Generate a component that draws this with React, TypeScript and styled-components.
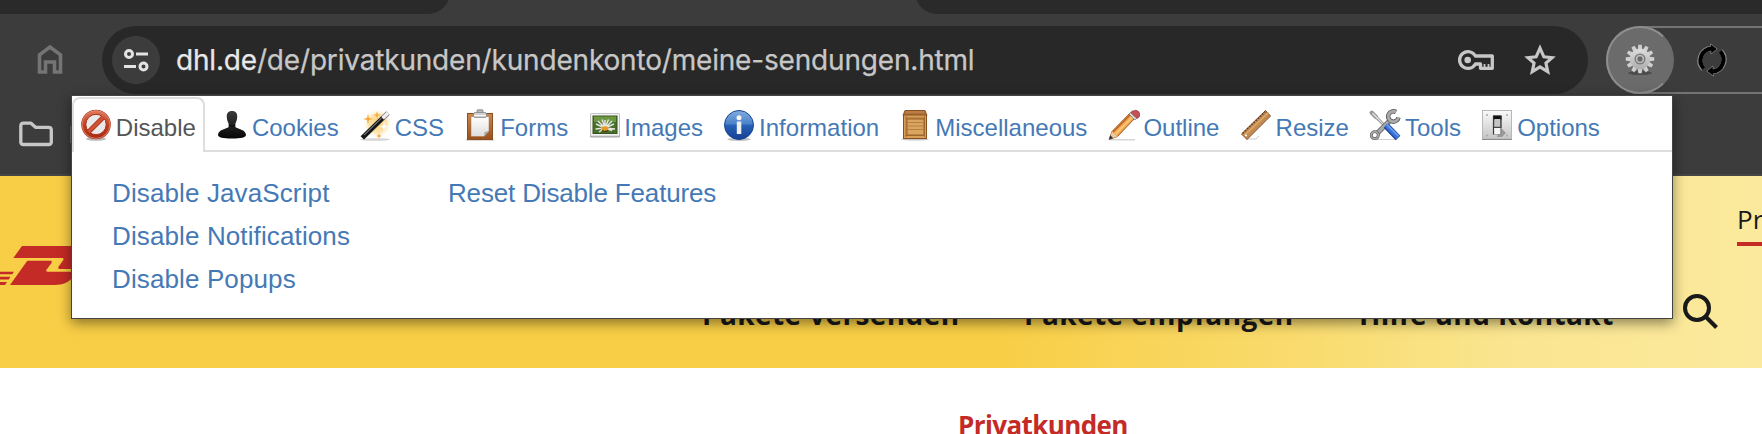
import { ReactNode } from "react";
import styled, { createGlobalStyle } from "styled-components";

const GlobalStyle = createGlobalStyle`
    * {
        box-sizing: border-box;
    }
    body {
        margin: 0;
        background: #fff;
        overflow: hidden;
    }
    svg {
        display: block;
        flex-shrink: 0;
    }
`

const Window = styled.div`
    position: relative;
    height: 434px;
    overflow: hidden;
    background: #fff;
`
/* browser chrome */
const Chrome = styled.div`
    height: 176px;
    background: #3c3c3c;
    border-bottom: 2px solid #464646;
`
const TabStrip = styled.div`
    display: flex;
    justify-content: space-between;
    align-items: flex-end;
    height: 14px;
    overflow: hidden;
`
const TabEdge = styled.div<{ $side: "left" | "right" }>`
    width: ${props => props.$side === "left" ? "450px" : "847px"};
    height: 40px;
    background: #2a2a2a;
    border-radius: ${props => props.$side === "left" ? "0 0 22px 0" : "0 0 0 22px"};
`
const Toolbar = styled.div`
    display: flex;
    align-items: center;
    height: 92px;
    padding-left: 34px;
`
const AddressBar = styled.div`
    display: flex;
    align-items: center;
    width: 1486px;
    height: 68px;
    margin-left: 36px;
    padding: 0 29px 0 10px;
    border-radius: 34px;
    background: #282828;
    color: #c7c7c7;
`
const SiteInfo = styled.div`
    display: flex;
    align-items: center;
    justify-content: center;
    width: 48px;
    height: 48px;
    margin-right: 16px;
    border-radius: 50%;
    background: #3c3c3c;
`
const Url = styled.div`
    flex: 1;
    font-family: Inter, "Liberation Sans", sans-serif;
    font-size: 28px;
    line-height: 40px;
    letter-spacing: -0.18px;
    white-space: nowrap;
    color: #c7c7c7;
    -webkit-text-stroke: 0.25px;
    b {
        font-weight: 400;
        color: #e8e8e8;
    }
`
const AddressActions = styled.div`
    display: flex;
    align-items: center;
    gap: 26px;
`
const Extensions = styled.div`
    display: flex;
    align-items: center;
    flex: 1;
    height: 68px;
    margin-left: 18px;
    border: 2px solid #747474;
    border-right: none;
    border-radius: 34px 0 0 34px;
`
const ActiveExtension = styled.div`
    display: flex;
    align-items: center;
    justify-content: center;
    width: 68px;
    height: 68px;
    margin: 0 22px 0 -2px;
    border: 2px solid #8e8e8e;
    border-right-color: #6b6b6b;
    border-radius: 50%;
    background: #6b6b6b;
`
const Bookmarks = styled.div`
    display: flex;
    align-items: center;
    height: 56px;
    padding-left: 17px;
`
const Divider = styled.div`
    width: 2px;
    height: 17px;
    margin-left: 15px;
    background: #6a6a6a;
`
/* web page under the popup */
const SiteHeader = styled.header`
    height: 192px;
    background: linear-gradient(90deg, #f8ce46 0, #f8ce46 1000px, #f9da6a 1275px, #fae691 1520px, #fbe99d 1762px);
    font-family: "Open Sans", "Noto Sans", sans-serif;
    color: #191919;
`
const MetaRow = styled.div`
    display: flex;
    justify-content: flex-end;
    height: 70px;
    padding-top: 26px;
`
const MetaLink = styled.div`
    width: 25px;
    height: 44px;
    border-bottom: 4px solid #c42a26;
    font-size: 26px;
    line-height: 34px;
    white-space: nowrap;
    overflow: hidden;
`
const MainRow = styled.div`
    display: flex;
    height: 122px;
`
const MainNav = styled.nav`
    display: flex;
    gap: 66px;
    margin: 50px 0 0 627px;
    font-size: 28px;
    font-weight: 700;
    line-height: 36px;
    white-space: nowrap;
`
const NavItem = styled.span<{ $width: number }>`
    width: ${props => props.$width}px;
    letter-spacing: 0.4px;
`
const SearchButton = styled.div`
    margin: 46px 0 0 67px;
`
const PageTitle = styled.h2`
    margin: 39px 0 0 958px;
    font-family: "Open Sans", "Noto Sans", sans-serif;
    font-size: 26px;
    font-weight: 700;
    line-height: 36px;
    letter-spacing: -0.6px;
    color: #c42a26;
`
/* extension popup */
const Popup = styled.div`
    position: absolute;
    top: 95px;
    left: 71px;
    width: 1602px;
    height: 224px;
    border: 1px solid #444;
    background: #fff;
    box-shadow: 0 4px 12px rgba(0, 0, 0, 0.45);
    font-family: "Liberation Sans", Arial, sans-serif;
    color: #4579b5;
`
const Tabs = styled.div`
    display: flex;
    height: 56px;
    padding-top: 1px;
    border-bottom: 2px solid #ddd;
`
const Tab = styled.div<{ $active?: boolean }>`
    display: flex;
    align-items: center;
    gap: 3.8px;
    height: 55px;
    margin-right: 3.3px;
    padding: 0 7px 1px 6px;
    border: 2px solid ${props => props.$active ? "#ddd" : "transparent"};
    border-bottom: none;
    border-radius: 8px 8px 0 0;
    background: ${props => props.$active ? "#fff" : "none"};
    color: ${props => props.$active ? "#555" : "inherit"};
    font-size: 24px;
    white-space: nowrap;
    span {
        padding-top: 5px;
    }
`
const Menu = styled.div`
    display: flex;
    padding: 20px 40px;
`
const MenuColumn = styled.div<{ $spacing: number }>`
    width: 336px;
    font-size: 26px;
    line-height: 43px;
    letter-spacing: ${props => props.$spacing}px;
    white-space: nowrap;
`

const Icon = ({ children }: { children: ReactNode }) => (
    <svg width="32" height="32" viewBox="0 0 32 32">{children}</svg>
)

const DisableIcon = () => (
    <Icon>
        <defs>
            <linearGradient id="red" x2="0" y2="1">
                <stop offset="0" stopColor="#dd7a5c" />
                <stop offset=".5" stopColor="#c8401f" />
                <stop offset="1" stopColor="#a92a12" />
            </linearGradient>
        </defs>
        <ellipse cx="16" cy="30" rx="10" ry="1.7" fill="#bbb" />
        <circle cx="16" cy="15.500" r="14.8" fill="#a8301a" />
        <circle cx="16" cy="15.500" r="13.9" fill="url(#red)" stroke="#e2937c" strokeWidth=".8" />
        <circle cx="16" cy="15.500" r="10.2" fill="#e9e9e9" stroke="#a8301a" />
        <path d="M9 22.500L23 8.500" stroke="#a8301a" strokeWidth="4.8" />
        <path d="M8.600 22.900L23.400 8.100" stroke="#cf5232" strokeWidth="3.2" />
    </Icon>
)

const CookiesIcon = () => (
    <Icon>
        <defs>
            <linearGradient id="person" x2="0" y2="1">
                <stop offset="0" stopColor="#3b3b3b" />
                <stop offset=".6" stopColor="#1c1c1c" />
                <stop offset="1" stopColor="#060606" />
            </linearGradient>
        </defs>
        <path d="M16 2c4 0 5.4 2.500 5.200 6-.1 3-1 5-1.800 6.500v3.500c2 2 10.600 2.500 10.600 8 0 2.400-5 3.500-14 3.500S2 28.400 2 26c0-5.500 8.600-6 10.600-8v-3.500C11.800 13 10.900 11 10.800 8 10.600 4.500 12 2 16 2z" fill="url(#person)" />
        <path d="M13 16q3 2.500 6 0" stroke="#080808" fill="none" />
    </Icon>
)

const CssIcon = () => (
    <Icon>
        <defs>
            <radialGradient id="glow">
                <stop offset="0" stopColor="#fbcf73" />
                <stop offset=".6" stopColor="#fde3ae" />
                <stop offset="1" stopColor="#fff" stopOpacity="0" />
            </radialGradient>
        </defs>
        <ellipse cx="16" cy="30.500" rx="15" ry="1.300" fill="#d5d5d5" />
        <circle cx="18.500" cy="14.500" r="15" fill="url(#glow)" />
        <path d="M9 5l1 4 4 1-4 1-1 4-1-4-4-1 4-1zM18 2l.8 3.200L22 6l-3.200.8L18 10l-.8-3.200L14 6l3.200-.8zM20 24l.8 2.200 2.200.8-2.200.8L20 30l-.8-2.200L17 27l2.200-.8z" fill="#f5a83b" />
        <path d="M25 12l1 4.500 4 1-4 1-1 4.500-1-4.500-4-1 4-1z" fill="#fff" />
        <path d="M3.200 29L29 4" stroke="#777" strokeWidth="5" />
        <path d="M3.500 28.700L24 8.700" stroke="#141414" strokeWidth="4.400" />
        <path d="M5 26.200L22.500 9.200" stroke="#777" strokeWidth="1.100" />
        <path d="M23.500 9.300L29 4" stroke="#eee" strokeWidth="3.500" />
    </Icon>
)

const FormsIcon = () => (
    <Icon>
        <defs>
            <linearGradient id="board" x2="0" y2="1">
                <stop offset="0" stopColor="#c98a51" />
                <stop offset="1" stopColor="#99501c" />
            </linearGradient>
            <linearGradient id="sheet" x2="0" y2="1">
                <stop offset="0" stopColor="#fff" />
                <stop offset="1" stopColor="#ddd" />
            </linearGradient>
        </defs>
        <path d="M2 31h28" stroke="#bbb" />
        <rect x="3.500" y="4.500" width="25" height="26" fill="url(#board)" stroke="#8c4d20" />
        <path d="M7 7.500h18v14.500L20 27.500H7z" fill="url(#sheet)" stroke="#ad6c3c" strokeWidth=".5" />
        <path d="M20 27.500l.5-4.500 4.500-1z" fill="#aaa" />
        <path d="M13 3.500V1.800Q13 .8 14 .8h4q1 0 1 1v1.700z" fill="#bbb" stroke="#777" strokeWidth=".8" />
        <rect x="9.500" y="3.500" width="13" height="5" rx="1.500" fill="#d2d2d2" stroke="#888" strokeWidth=".8" />
        <path d="M10 6.500h12" stroke="#f8f8f8" />
    </Icon>
)

const ImagesIcon = () => (
    <Icon>
        <rect x="1" y="4.500" width="30" height="24" rx="1.200" fill="#aaa" />
        <rect x="1.500" y="4.500" width="29" height="22.500" rx="1" fill="#f4f4f4" stroke="#bdbdbd" strokeWidth=".8" />
        <rect x="4" y="7" width="24" height="17.500" fill="#49702a" stroke="#38521f" />
        <path d="M5 7.500h22v5.500H5z" fill="#6d9741" />
        <g stroke="#e5e5e2" strokeWidth="1.500">
            <path d="M16 19L7 15M16 19L9 12M16 19L13 10.500M16 19V11M16 19l3.500-8.500M16 19l7-7M16 19l9-4M16 19l10 1M16 19L6.500 20M16 19l-6 4M16 19l7 2.500" />
        </g>
        <ellipse cx="16" cy="19.500" rx="3.500" ry="2.200" fill="#e79a24" />
        <path d="M13 21.500q3 2 6 0" stroke="#583410" strokeWidth="1.200" fill="none" />
    </Icon>
)

const InformationIcon = () => (
    <Icon>
        <defs>
            <linearGradient id="blue" x2="0" y2="1">
                <stop offset="0" stopColor="#81acdf" />
                <stop offset=".45" stopColor="#4c83cb" />
                <stop offset=".52" stopColor="#2560b6" />
                <stop offset="1" stopColor="#163f93" />
            </linearGradient>
        </defs>
        <ellipse cx="16" cy="30.300" rx="12" ry="1.600" fill="#c2c2c2" />
        <circle cx="16" cy="16" r="14.500" fill="url(#blue)" stroke="#1b4795" />
        <circle cx="16" cy="8.700" r="2.500" fill="#f5f5f5" />
        <rect x="13.800" y="12.500" width="4.500" height="12.500" fill="#f0f0f0" />
    </Icon>
)

const MiscellaneousIcon = () => (
    <Icon>
        <ellipse cx="16" cy="30.300" rx="14" ry="1.200" fill="#c5c5c5" />
        <path d="M6 1.500h20l2 5H4z" fill="#b0703a" stroke="#8b5225" />
        <path d="M7 3h18" stroke="#c88b50" />
        <rect x="4.500" y="6" width="23" height="23.500" fill="#d6a058" stroke="#87511f" />
        <path d="M6 9h20M6 26.500h20M7 7v21M25.500 7v21" stroke="#aa6e32" />
        <rect x="8" y="10" width="17" height="16" fill="#d9a65f" stroke="#975e27" />
        <path d="M9 13.500h15M9 17h15M9 20.500h15" stroke="#b67e40" />
    </Icon>
)

const OutlineIcon = () => (
    <Icon>
        <path d="M2 30.800h25" stroke="#ccc" strokeWidth="1.200" />
        <path d="M1 30.500L4 22.500 22.500 3.500l5 5L9.500 27.500z" fill="#f0a64b" stroke="#965018" strokeWidth=".9" />
        <path d="M5 23L23.500 4.500" stroke="#bd6324" strokeWidth="1.500" />
        <path d="M7.500 25L25.500 7" stroke="#ffc678" strokeWidth="1.800" />
        <path d="M1 30.500l3-8 5.500 5z" fill="#e9c99e" />
        <path d="M1 30.500l1.300-4.200 2.900 2.900z" fill="#333" />
        <path d="M21 5L24.500 1.700l6 6L27 11z" fill="#d9d9d9" stroke="#777" strokeWidth=".7" />
        <path d="M24.500 2.300Q28 0 30.500 2.500t.7 5.500l-2.200 1.500L23 4z" fill="#c4505a" stroke="#8c2d37" strokeWidth=".6" />
    </Icon>
)

const ResizeIcon = () => (
    <Icon>
        <path d="M6 30h10l3-3" stroke="#ccc" fill="none" />
        <path d="M1.500 25L25.500 1.500l5 5.500L7 30.500z" fill="#c48b50" stroke="#81502a" />
        <path d="M2.800 24.200L25.200 2.800" stroke="#593519" strokeWidth="1.500" strokeDasharray="1.300 1.700" />
        <path d="M4.300 26.500L28.500 3.500" stroke="#dca970" strokeWidth="1.500" />
        <circle cx="6" cy="26.500" r="1" fill="#fff" />
    </Icon>
)

const ToolsIcon = () => (
    <Icon>
        <path d="M7 30.500h21" stroke="#d2d2d2" />
        <path d="M3 4L17 18" stroke="#777" strokeWidth="2.600" />
        <path d="M2.800 3.800L7 8" stroke="#999" strokeWidth="4.400" strokeLinecap="round" />
        <path d="M3.500 4.300L16 17" stroke="#e5e5e5" strokeWidth="1.300" />
        <path d="M6.500 26L22.500 10" stroke="#555" strokeWidth="5" />
        <path d="M6.500 26L22.500 10" stroke="#aaa" strokeWidth="3.500" />
        <path d="M27 3A5.200 5.200 0 1 0 29.500 8.500" fill="none" stroke="#555" strokeWidth="4.400" />
        <path d="M27 3A5.200 5.200 0 1 0 29.500 8.500" fill="none" stroke="#aaa" strokeWidth="2.900" />
        <circle cx="5.800" cy="26.200" r="3.500" fill="#fff" stroke="#555" strokeWidth="2.800" />
        <circle cx="5.800" cy="26.200" r="3.500" fill="none" stroke="#aaa" strokeWidth="1.700" />
        <path d="M17 16.500L29 29" stroke="#1b449b" strokeWidth="6.500" />
        <path d="M17 16L29 28.500" stroke="#3975d8" strokeWidth="4.500" />
        <path d="M18 15.800L29.500 27" stroke="#76a5ef" strokeWidth="1.300" />
    </Icon>
)

const OptionsIcon = () => (
    <Icon>
        <defs>
            <linearGradient id="plate" x2="0" y2="1">
                <stop offset="0" stopColor="#fafafa" />
                <stop offset="1" stopColor="#c5c5c5" />
            </linearGradient>
        </defs>
        <rect x="1.500" y="1.500" width="29" height="28.500" fill="url(#plate)" stroke="#b8b8b8" />
        <path d="M1 30.500h30" stroke="#8d8d8d" />
        <path d="M19 18l6 6-4 4h-5z" fill="#999" />
        <rect x="12" y="6.500" width="8.500" height="19" fill="#8a8a8a" />
        <rect x="12" y="6.500" width="8.500" height="4" fill="#111" />
        <path d="M12.400 7v18.500M20 7v12" stroke="#333" />
        <rect x="13.500" y="10" width="5.500" height="8" fill="#c4c4c4" />
        <path d="M13 18.300h6.500" stroke="#333" />
        <rect x="13.200" y="19" width="6" height="6" fill="#f6f6f6" />
        <g fill="#aaa">
            <circle cx="6" cy="6" r="1" />
            <circle cx="26" cy="6" r="1" />
            <circle cx="6" cy="26.500" r="1" />
            <circle cx="26" cy="26.500" r="1" />
        </g>
    </Icon>
)

const HomeIcon = () => (
    <svg width="32" height="32" viewBox="0 0 32 32" fill="none" stroke="#747474" strokeWidth="3.600">
        <path d="M5.500 28V10.800L16 3l10.500 7.800V28H20.500V18h-9v10z" />
    </svg>
)

const TuneIcon = () => (
    <svg width="26" height="24" viewBox="0 0 26 24" fill="none" stroke="#e3e3e3" strokeWidth="3">
        <circle cx="6" cy="6" r="3.500" />
        <path d="M13 6h12M1 18.500h12" />
        <circle cx="20.500" cy="18.500" r="3.500" />
    </svg>
)

const KeyIcon = () => (
    <svg width="38" height="24" viewBox="0 0 38 24" fill="none" stroke="#c7c7c7" strokeWidth="3.300" strokeLinejoin="round">
        <path d="M18.400 8A8.400 8.400 0 1 0 18.400 16H23.500V20.300H35.300V8z" />
        <circle cx="10.700" cy="12" r="3.300" fill="#c7c7c7" stroke="none" />
        <path d="M27.500 20v-4M31.500 20v-4" strokeWidth="1.800" />
    </svg>
)

const StarIcon = () => (
    <svg width="38" height="38" viewBox="0 0 24 24" fill="none" stroke="#c7c7c7" strokeWidth="2">
        <path d="M12 4.500l2.450 5.500 5.200.5-3.900 3.500 1.150 5.400L12 16.400l-4.900 3 1.150-5.400-3.900-3.500 5.200-.5z" />
    </svg>
)

const GearIcon = () => (
    <svg width="32" height="34" viewBox="-16 -16 32 34">
        <defs>
            <linearGradient id="steel" x2="0" y2="1">
                <stop offset="0" stopColor="#dedede" />
                <stop offset="1" stopColor="#adadad" />
            </linearGradient>
        </defs>
        <ellipse cy="14" rx="12" ry="2" fill="#4c4c4c" />
        <g fill="#d0d0d0">
            {Array.from({ length: 12 }, (_, i) => (
                <path key={i} d="M-2.200-9l.5-5.200h3.400l.5 5.200z" transform={`rotate(${i * 30})`} />
            ))}
        </g>
        <circle r="10.300" fill="url(#steel)" />
        <circle r="4.800" fill="none" stroke="#7c7c7c" strokeWidth="1.500" />
        <circle r="3.200" fill="#6b6b6b" stroke="#ccc" strokeWidth=".8" />
    </svg>
)

const SyncIcon = () => (
    <svg width="32" height="34" viewBox="-16 -17 32 34">
        {[0, 180].map(angle => (
            <g key={angle} transform={`rotate(${angle})`}>
                <path d="M-8.500 9A12 12 0 0 1-1-11.500" fill="none" stroke="#858585" strokeWidth="5.200" />
                <path d="M-1.500-16.200L5.300-11-1-6z" fill="#000" stroke="#858585" strokeWidth=".8" />
                <path d="M-8.200 8.600A12 12 0 0 1 0-11.600" fill="none" stroke="#000" strokeWidth="4" />
            </g>
        ))}
    </svg>
)

const FolderIcon = () => (
    <svg width="38" height="28" viewBox="0 0 38 28" fill="none" stroke="#c7c7c7" strokeWidth="3.300" strokeLinejoin="round">
        <path d="M3.800 6.200Q3.800 3.200 6.500 3.200H14L18.500 7.300H31.500Q34.300 7.300 34.300 10V22Q34.300 24.500 31.500 24.500H6.500Q3.800 24.500 3.800 22z" />
    </svg>
)

const DhlLogo = () => (
    <svg width="75" height="40" viewBox="0 0 75 40" fill="#c42a26">
        <path d="M22 0H75V23H60Q57 23 59 20L63 14.500Q64.500 12 62 12H13.300z" />
        <path d="M27.300 14.700H51Q52.500 15 51.500 17L46.300 24Q45.500 25.700 48 25.700H75Q71 39 54 39H10z" />
        <path d="M0 25.800H14L12.200 28.300H0zM0 30.800H10.500L8.700 33.500H0zM0 36H7L5 39H0z" />
    </svg>
)

const SearchIcon = () => (
    <svg width="38" height="38" viewBox="0 0 38 38" fill="none" stroke="#191919" strokeWidth="4">
        <circle cx="15" cy="16" r="12" />
        <path d="M24 25l10.500 10.500" />
    </svg>
)

const tabs = [
    { name: "Disable", icon: <DisableIcon /> },
    { name: "Cookies", icon: <CookiesIcon /> },
    { name: "CSS", icon: <CssIcon /> },
    { name: "Forms", icon: <FormsIcon /> },
    { name: "Images", icon: <ImagesIcon /> },
    { name: "Information", icon: <InformationIcon /> },
    { name: "Miscellaneous", icon: <MiscellaneousIcon /> },
    { name: "Outline", icon: <OutlineIcon /> },
    { name: "Resize", icon: <ResizeIcon /> },
    { name: "Tools", icon: <ToolsIcon /> },
    { name: "Options", icon: <OptionsIcon /> },
]

const menu = [
    { spacing: 0.12, items: ["Disable JavaScript", "Disable Notifications", "Disable Popups"] },
    { spacing: -0.16, items: ["Reset Disable Features"] },
]

function App() {
    return (
        <Window>
            <GlobalStyle />
            <Chrome>
                <TabStrip>
                    <TabEdge $side="left" />
                    <TabEdge $side="right" />
                </TabStrip>
                <Toolbar>
                    <HomeIcon />
                    <AddressBar>
                        <SiteInfo><TuneIcon /></SiteInfo>
                        <Url><b>dhl.de</b>/de/privatkunden/kundenkonto/meine-sendungen.html</Url>
                        <AddressActions>
                            <KeyIcon />
                            <StarIcon />
                        </AddressActions>
                    </AddressBar>
                    <Extensions>
                        <ActiveExtension><GearIcon /></ActiveExtension>
                        <SyncIcon />
                    </Extensions>
                </Toolbar>
                <Bookmarks>
                    <FolderIcon />
                    <Divider />
                </Bookmarks>
            </Chrome>
            <SiteHeader>
                <MetaRow>
                    <MetaLink>Pr</MetaLink>
                </MetaRow>
                <MainRow>
                    <DhlLogo />
                    <MainNav>
                        <NavItem $width={256}>Pakete versenden</NavItem>
                        <NavItem $width={269}>Pakete empfangen</NavItem>
                        <NavItem $width={256}>Hilfe und Kontakt</NavItem>
                    </MainNav>
                    <SearchButton><SearchIcon /></SearchButton>
                </MainRow>
            </SiteHeader>
            <PageTitle>Privatkunden</PageTitle>
            <Popup>
                <Tabs>
                    {tabs.map((tab, index) => (
                        <Tab key={tab.name} $active={index === 0}>
                            {tab.icon}
                            <span>{tab.name}</span>
                        </Tab>
                    ))}
                </Tabs>
                <Menu>
                    {menu.map(({ spacing, items }) => (
                        <MenuColumn key={items[0]} $spacing={spacing}>
                            {items.map(item => <div key={item}>{item}</div>)}
                        </MenuColumn>
                    ))}
                </Menu>
            </Popup>
        </Window>
    )
}
export default App;
